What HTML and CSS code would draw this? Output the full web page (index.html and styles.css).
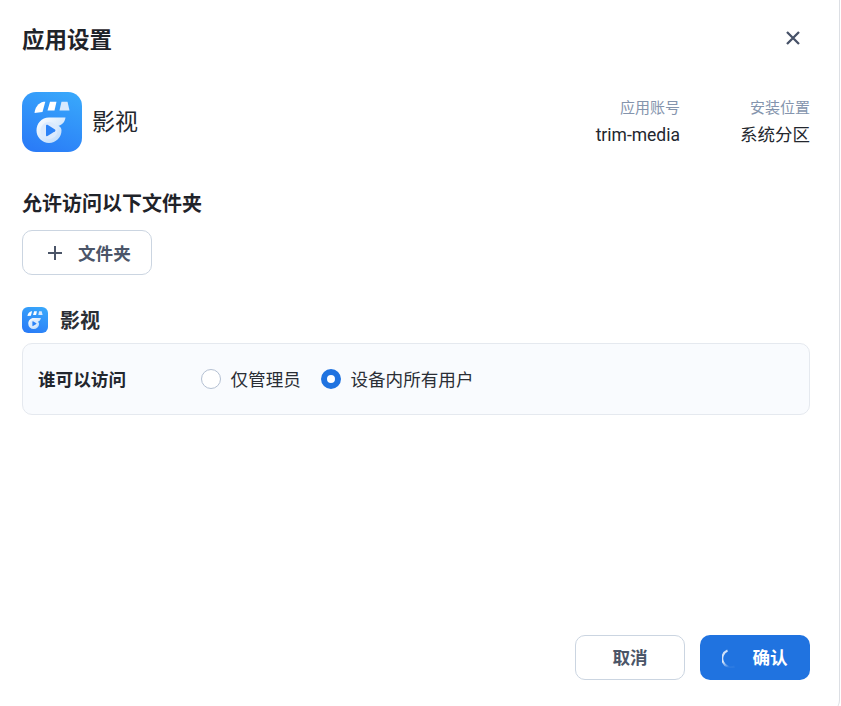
FILE: index.html
```html
<!DOCTYPE html>
<html lang="zh">
<head>
<meta charset="utf-8">
<title>应用设置</title>
<link rel="stylesheet" href="styles.css">
</head>
<body>
<svg class="defs" width="0" height="0" aria-hidden="true">
  <defs>
    <linearGradient id="bg" x1="0.7" y1="0" x2="0.3" y2="1">
      <stop offset="0" stop-color="#38a6fb"/>
      <stop offset="1" stop-color="#2a7cf7"/>
    </linearGradient>
    <linearGradient id="fg" x1="0" y1="0" x2="1" y2="1">
      <stop offset="0" stop-color="#ffffff"/>
      <stop offset="1" stop-color="#b4d6fb"/>
    </linearGradient>
    <symbol id="logo" viewBox="0 0 60 60">
      <rect width="60" height="60" rx="14" fill="url(#bg)"/>
      <path d="M12.500 21C13 15.500 16.500 11 21.500 9.800l1.800 0-2.800 10.200z" fill="#fff"/>
      <path d="M28 9.800h6.500l-2 8.700h-7z" fill="#fff"/>
      <path d="M39.500 9.800h6l2 8.700h-10z" fill="#d8e9fd"/>
      <path d="M14.500 38.500C14.500 31.500 19.500 25.500 27 25.500H43.500C43 30 40 33 36.500 33.800 38.500 35 39.500 36.500 39.500 38.500A12.500 12.500 0 1 1 14.500 38.500z" fill="url(#fg)"/>
      <circle cx="27" cy="38.500" r="8.500" fill="#dbeafd"/>
      <path d="M24 33.700c0-.8.800-1.300 1.500-.9l7.500 4.800c.6.400.6 1.300 0 1.700l-7.500 4.800c-.7.400-1.500-.1-1.500-.9z" fill="#2a82f7"/>
    </symbol>
    <linearGradient id="sp" x1="0" y1="0" x2="0.5" y2="1">
      <stop offset="0" stop-color="#fff" stop-opacity=".75"/>
      <stop offset=".55" stop-color="#fff" stop-opacity=".85"/>
      <stop offset="1" stop-color="#fff" stop-opacity=".05"/>
    </linearGradient>
  </defs>
</svg>
<main class="dialog">
  <header class="head">
    <h1 class="title">应用设置</h1>
    <button class="close" aria-label="关闭">
      <svg width="16" height="16" viewBox="0 0 16 16"><path d="M2 2l12 12M14 2L2 14" stroke="#475268" stroke-width="2.300" fill="none"/></svg>
    </button>
  </header>

  <section class="app">
    <div class="app-id">
      <svg class="logo-lg"><use href="#logo"/></svg>
      <span class="app-name">影视</span>
    </div>
    <div class="meta">
      <div class="meta-item"><span class="meta-label">应用账号</span><span class="meta-value">trim-media</span></div>
      <div class="meta-item"><span class="meta-label">安装位置</span><span class="meta-value">系统分区</span></div>
    </div>
  </section>

  <h2 class="sub">允许访问以下文件夹</h2>
  <button class="btn-add">
    <svg width="16" height="16" viewBox="0 0 16 16"><path d="M8 1v14M1 8h14" stroke="#4b5568" stroke-width="2" fill="none"/></svg>
    <span>文件夹</span>
  </button>

  <div class="folder-head">
    <svg class="logo-sm"><use href="#logo"/></svg>
    <span>影视</span>
  </div>
  <div class="panel">
    <span class="panel-label">谁可以访问</span>
    <label class="radio"><i class="dot"></i><span>仅管理员</span></label>
    <label class="radio"><i class="dot on"></i><span>设备内所有用户</span></label>
  </div>

  <footer class="foot">
    <button class="btn cancel">取消</button>
    <button class="btn ok">
      <svg class="spin" width="20" height="20" viewBox="0 0 20 20"><path d="M5.500 2.500A8.700 8.700 0 0 0 12.500 18.500" stroke="url(#sp)" stroke-width="2" fill="none"/></svg>
      <span>确认</span>
    </button>
  </footer>
</main>
</body>
</html>
```
FILE: styles.css
```css
* { box-sizing: border-box; }
html, body { margin: 0; height: 100%; background: #fff; }
body { font-family: "Roboto", "Noto Sans CJK SC", sans-serif; color: #1f2329; overflow: hidden; }
.defs { position: absolute; }
.dialog {
  width: 840px; height: 712px;
  border-right: 1px solid #dcdfe4;
  border-bottom-right-radius: 12px;
  padding: 0 29px 32px 22px;
  display: flex; flex-direction: column;
}
.head { display: flex; align-items: center; justify-content: space-between; height: 78px; }
.title { margin: 0; padding-top: 2px; font-size: 22.500px; font-weight: 700; line-height: 30px; color: #1f2329; }
.close { border: 0; background: none; padding: 0; width: 16px; height: 16px; margin: -2px 9px 0 0; display: flex; }
.app { display: flex; align-items: center; justify-content: space-between; height: 60px; margin-top: 14px; }
.app-id { display: flex; align-items: center; gap: 10px; }
.logo-lg { width: 60px; height: 60px; }
.app-name { font-size: 23px; line-height: 30px; padding-top: 2px; color: #23272e; }
.meta { display: flex; gap: 60px; }
.meta-item { display: flex; flex-direction: column; align-items: flex-end; gap: 4px; }
.meta-label { font-size: 15px; line-height: 20px; color: #8494ad; }
.meta-value { font-size: 17.500px; line-height: 24px; color: #23272e; padding-top: 1px; }
.sub { margin: 38px 0 0; font-size: 20px; line-height: 28px; font-weight: 700; color: #1f2329; }
.btn-add {
  margin-top: 12px; width: 130px; height: 45px; border: 1px solid #cbd5e1; border-radius: 10px; background: #fff;
  display: flex; align-items: center; gap: 15px; padding: 0 0 0 24px;
  font: 700 17.600px/24px "Roboto", "Noto Sans CJK SC", sans-serif; color: #4b5568;
}
.btn-add span { padding-top: 2px; }
.folder-head { display: flex; align-items: center; gap: 12px; margin-top: 32px; height: 26px; font-size: 20px; font-weight: 700; color: #2a2e35; }
.folder-head span { margin-top: -2px; }
.logo-sm { width: 26px; height: 26px; }
.panel {
  margin-top: 10px; height: 72px; background: #f9fbfe; border: 1px solid #e5e9ef; border-radius: 10px;
  display: flex; align-items: center; padding: 0 15px; font-size: 17.600px; line-height: 24px;
}
.panel-label { width: 163px; padding-top: 2px; font-weight: 700; color: #23272e; }
.radio { display: flex; align-items: center; gap: 9.500px; margin-right: 20px; color: #2a2e35; }
.radio span { padding-top: 2px; }
.dot { width: 20px; height: 20px; border-radius: 50%; border: 1px solid #b4c0d2; background: #fff; }
.dot.on { border: 6px solid #2073e0; }
.foot { margin-top: auto; display: flex; justify-content: flex-end; gap: 15px; }
.btn { width: 110px; height: 45px; border-radius: 10px; font: 700 17.600px/24px "Roboto", "Noto Sans CJK SC", sans-serif; display: flex; align-items: center; justify-content: center; padding: 0; }
.btn span, .cancel { padding-top: 1px; }
.cancel { background: #fff; border: 1px solid #cbd5e1; color: #4b5568; }
.ok { background: #2073e0; border: 0; color: #fff; gap: 10px; }
```
